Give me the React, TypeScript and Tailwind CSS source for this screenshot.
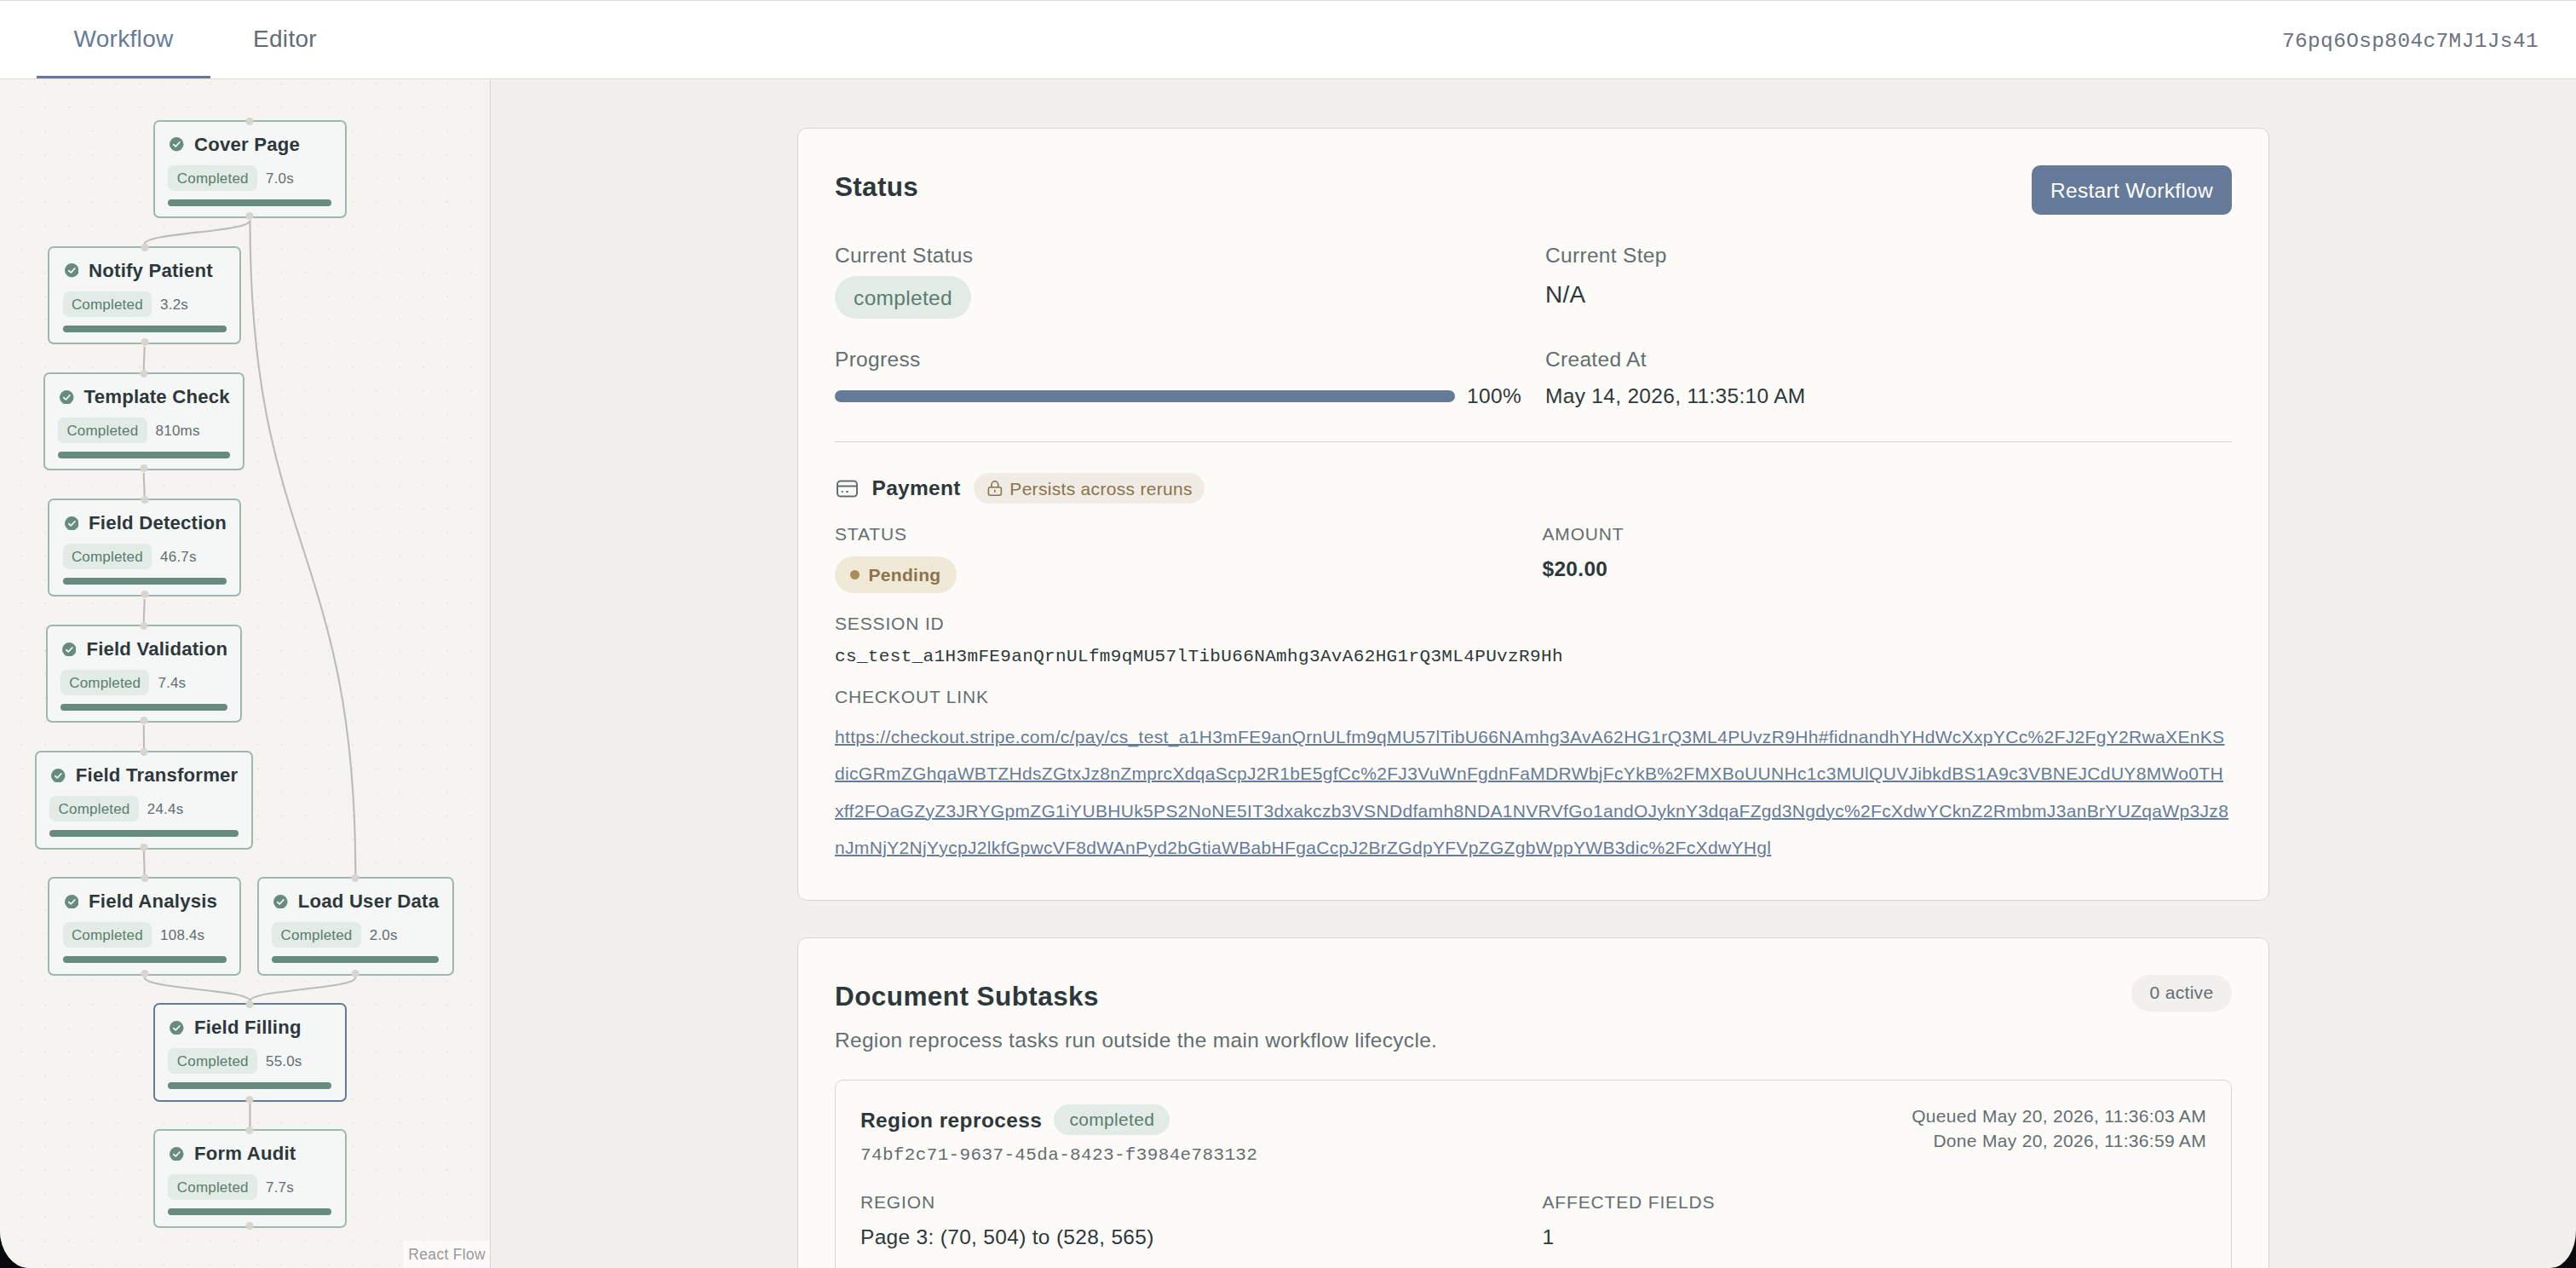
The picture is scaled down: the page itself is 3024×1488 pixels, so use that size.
import type { ReactNode } from "react";
import clsx from "clsx";

type WorkflowNode = {
	id: string;
	label: string;
	duration: string;
	x: number;
	y: number;
	width: number;
	selected?: boolean;
};

const NODE_HEIGHT = 115.3;
const CANVAS_TOP = 93;

const nodes: WorkflowNode[] = [
	{ id: "cover", label: "Cover Page", duration: "7.0s", x: 180.2, y: 141, width: 226.6 },
	{ id: "notify", label: "Notify Patient", duration: "3.2s", x: 56.3, y: 289, width: 226.6 },
	{ id: "template", label: "Template Check", duration: "810ms", x: 50.8, y: 437.2, width: 236 },
	{ id: "detection", label: "Field Detection", duration: "46.7s", x: 56.3, y: 585.2, width: 226.6 },
	{ id: "validation", label: "Field Validation", duration: "7.4s", x: 53.6, y: 733.2, width: 230.4 },
	{ id: "transformer", label: "Field Transformer", duration: "24.4s", x: 41, y: 881.3, width: 256 },
	{ id: "analysis", label: "Field Analysis", duration: "108.4s", x: 56.3, y: 1029.3, width: 226.6 },
	{ id: "userData", label: "Load User Data", duration: "2.0s", x: 302, y: 1029.3, width: 230.7 },
	{ id: "filling", label: "Field Filling", duration: "55.0s", x: 180.2, y: 1177.3, width: 226.6, selected: true },
	{ id: "audit", label: "Form Audit", duration: "7.7s", x: 180.2, y: 1325.4, width: 226.6 },
];

const edges: [string, string][] = [
	["cover", "notify"],
	["cover", "userData"],
	["notify", "template"],
	["template", "detection"],
	["detection", "validation"],
	["validation", "transformer"],
	["transformer", "analysis"],
	["analysis", "filling"],
	["userData", "filling"],
	["filling", "audit"],
];

const checkoutUrlLines = [
	"https://checkout.stripe.com/c/pay/cs_test_a1H3mFE9anQrnULfm9qMU57lTibU66NAmhg3AvA62HG1rQ3ML4PUvzR9Hh#fidnandhYHdWcXxpYCc%2FJ2FgY2RwaXEnKS",
	"dicGRmZGhqaWBTZHdsZGtxJz8nZmprcXdqaScpJ2R1bE5gfCc%2FJ3VuWnFgdnFaMDRWbjFcYkB%2FMXBoUUNHc1c3MUlQUVJibkdBS1A9c3VBNEJCdUY8MWo0TH",
	"xff2FOaGZyZ3JRYGpmZG1iYUBHUk5PS2NoNE5IT3dxakczb3VSNDdfamh8NDA1NVRVfGo1andOJyknY3dqaFZgd3Ngdyc%2FcXdwYCknZ2RmbmJ3anBrYUZqaWp3Jz8",
	"nJmNjY2NjYycpJ2lkfGpwcVF8dWAnPyd2bGtiaWBabHFgaCcpJ2BrZGdpYFVpZGZgbWppYWB3dic%2FcXdwYHgl",
];

function edgePath(sourceId: string, targetId: string) {
	const source = nodes.find((node) => node.id === sourceId)!;
	const target = nodes.find((node) => node.id === targetId)!;
	const sx = source.x + source.width / 2;
	const sy = source.y + NODE_HEIGHT + 2.5;
	const tx = target.x + target.width / 2;
	const ty = target.y - 2.5;
	const mid = (sy + ty) / 2;
	return `M${sx},${sy} C${sx},${mid} ${tx},${mid} ${tx},${ty}`;
}

function CheckBadgeIcon() {
	return (
		<svg className="ml-[2px] size-[16.5px] shrink-0" viewBox="0 0 16 16" fill="none">
			<circle cx="8" cy="8" r="8" fill="#678c7f" />
			<path
				d="M4.6 8.3 7 10.5l4.5-4.7"
				stroke="#f5f8f7"
				strokeWidth="1.7"
				strokeLinecap="round"
				strokeLinejoin="round"
			/>
		</svg>
	);
}

function CardIcon() {
	return (
		<svg
			className="size-[28px] shrink-0"
			viewBox="0 0 28 28"
			fill="none"
			stroke="#636e72"
			strokeWidth="2"
			strokeLinecap="round"
		>
			<rect x="3" y="5.6" width="23" height="18" rx="3.8" />
			<path d="M3 11.6h23M8.6 18h.4M14 18h1" />
		</svg>
	);
}

function LockIcon() {
	return (
		<svg
			className="size-[20px] shrink-0"
			viewBox="0 0 20 20"
			fill="none"
			stroke="#8b734b"
			strokeWidth="1.6"
			strokeLinecap="round"
			strokeLinejoin="round"
		>
			<rect x="2.4" y="8.7" width="15" height="9.6" rx="2.2" />
			<path d="M6 8.7V5.7a3.9 3.9 0 0 1 7.8 0v3M9.9 12.4v1.8" />
		</svg>
	);
}

function Handle({ className }: { className: string }) {
	return (
		<span
			className={clsx(
				"absolute left-1/2 size-[9px] -translate-x-1/2 rounded-full bg-[#d8d4ce]",
				className,
			)}
		/>
	);
}

function NodeCard({ node }: { node: WorkflowNode }) {
	return (
		<div
			className={clsx(
				"absolute flex h-[115.3px] flex-col rounded-[7px] border-2 bg-[#f5f7f6] px-[15.3px] pt-[11.6px] tracking-[0.19px]",
				node.selected ? "border-[#667b99]" : "border-[#9fb8ae]",
			)}
			style={{ left: node.x, top: node.y - CANVAS_TOP, width: node.width }}
		>
			<Handle className="-top-[5px]" />
			<div className="flex h-[30px] items-center gap-[12px]">
				<CheckBadgeIcon />
				<span className="text-[22.2px] leading-[30px] font-bold whitespace-nowrap text-[#2d383c]">
					{node.label}
				</span>
			</div>
			<div className="mt-[9.4px] flex h-[30px] items-center gap-[10px] text-[17px] leading-[31px]">
				<span className="h-[30px] rounded-[7px] bg-[#e2ebe5] px-[10.3px] text-[#5a7d6f]">
					Completed
				</span>
				<span className="h-[30px] text-[#636e72]">{node.duration}</span>
			</div>
			<div className="mt-[10px] h-[8px] rounded-full bg-[#678c7f]" />
			<Handle className="-bottom-[4px]" />
		</div>
	);
}

function FlowCanvas() {
	return (
		<aside className="relative w-[576px] shrink-0 overflow-hidden border-r border-[#d4d4d0] bg-[#f6f4f1]">
			<svg className="absolute inset-0" width="575" height="1395" viewBox="0 93 575 1395" fill="none">
				<pattern
					id="dots"
					x="11.5"
					y="84.45"
					width="27.75"
					height="27.71"
					patternUnits="userSpaceOnUse"
				>
					<circle cx="13.9" cy="13.9" r="0.9" fill="#d9d8d3" />
				</pattern>
				<rect x="14" y="93" width="561" height="1395" fill="url(#dots)" />
				<g stroke="#babcbb" strokeWidth="2.1">
					{edges.map(([source, target]) => (
						<path key={`${source}-${target}`} d={edgePath(source, target)} />
					))}
				</g>
			</svg>
			{nodes.map((node) => (
				<NodeCard key={node.id} node={node} />
			))}
			<span className="absolute right-0 bottom-0 h-[32px] bg-white/50 px-[5px] text-[17.5px] leading-[32px] text-[#999]">
				React Flow
			</span>
		</aside>
	);
}

function Header() {
	return (
		<header className="flex h-[93px] shrink-0 items-stretch justify-between border-b border-[#dfddd2] bg-white pr-[44px] pl-[43px] shadow-[inset_0_2px_0_-1px_#dfe1df]">
			<nav className="flex gap-[6px] text-[28px] leading-[91px]">
				<button type="button" className="w-[204px] border-b-3 border-[#667b99] text-[#667b99]">
					Workflow
				</button>
				<button type="button" className="border-b-3 border-transparent px-[44px] text-[#636e72]">
					Editor
				</button>
			</nav>
			<span className="font-['Liberation_Mono',monospace] text-[24.5px] leading-[98px] tracking-[0.35px] text-[#6b7280]">
				76pq6Osp804c7MJ1Js41
			</span>
		</header>
	);
}

function Field({ label, children }: { label: string; children: ReactNode }) {
	return (
		<div>
			<div className="mb-[7px] leading-[35px] text-[#636e72]">{label}</div>
			{children}
		</div>
	);
}

function Caption({ className, children }: { className?: string; children: ReactNode }) {
	return (
		<div
			className={clsx(
				"text-[21px] leading-[30px] tracking-[0.84px] text-[#636e72] uppercase",
				className,
			)}
		>
			{children}
		</div>
	);
}

function StatusPanel() {
	return (
		<section className="h-[907px] shrink-0 rounded-[11px] border border-[#d6d5d0] bg-[#fdfbf8] p-[43px]">
			<div className="flex items-start justify-between">
				<h2 className="text-[31.5px] leading-[50px] font-bold">Status</h2>
				<button
					type="button"
					className="h-[58px] w-[235px] rounded-[10px] bg-[#667b99] leading-[59px] text-white"
				>
					Restart Workflow
				</button>
			</div>

			<div className="mt-[30px] grid grid-cols-2 gap-x-[28px] gap-y-[30px]">
				<Field label="Current Status">
					<span className="block h-[50px] w-[160px] rounded-full bg-[#e2ebe5] text-center leading-[51px] text-[#5a7d6f]">
						completed
					</span>
				</Field>
				<Field label="Current Step">
					<div className="text-[28px] leading-[44px]">N/A</div>
				</Field>
				<Field label="Progress">
					<div className="flex items-center gap-[14px] leading-[37px]">
						<div className="h-[14px] flex-1 rounded-full bg-[#667b99]" />
						<span>100%</span>
					</div>
				</Field>
				<Field label="Created At">
					<div className="leading-[37px]">May 14, 2026, 11:35:10 AM</div>
				</Field>
			</div>

			<div className="mt-[35px] border-t border-[#d6d5d0] pt-[36px]">
				<div className="flex h-[36px] items-center">
					<CardIcon />
					<h3 className="ml-[15.5px] leading-[36px] font-bold">Payment</h3>
					<span className="ml-[15px] flex h-[36px] items-center gap-[7.5px] rounded-full bg-[#f0ebe4] pr-[14px] pl-[15px] text-[21px] text-[#8b734b]">
						<LockIcon />
						Persists across reruns
					</span>
				</div>

				<div className="mt-[21px] grid grid-cols-2 gap-x-[21px]">
					<div>
						<Caption>Status</Caption>
						<span className="mt-[11px] flex h-[43px] w-[143px] items-center gap-[10.5px] rounded-full bg-[#f1e9d8] pl-[18px] text-[21px] font-bold text-[#8b734b]">
							<span className="size-[11px] rounded-full bg-[#a98d5d]" />
							Pending
						</span>
					</div>
					<div>
						<Caption>Amount</Caption>
						<div className="mt-[8px] leading-[35px] font-bold">$20.00</div>
					</div>
				</div>

				<Caption className="mt-[21px]">Session ID</Caption>
				<div className="mt-[7px] font-['Liberation_Mono',monospace] text-[21px] leading-[34px] tracking-[0.35px]">
					cs_test_a1H3mFE9anQrnULfm9qMU57lTibU66NAmhg3AvA62HG1rQ3ML4PUvzR9Hh
				</div>

				<Caption className="mt-[15px]">Checkout Link</Caption>
				<a
					href="#"
					className="mt-[10px] block text-[21px] leading-[43.3px] tracking-[0.33px] whitespace-nowrap text-[#667b99] underline decoration-2"
				>
					{checkoutUrlLines.map((line) => (
						<span key={line} className="block">
							{line}
						</span>
					))}
				</a>
			</div>
		</section>
	);
}

function SubtasksPanel() {
	return (
		<section className="h-[600px] shrink-0 rounded-[11px] border border-[#d6d5d0] bg-[#fdfbf8] p-[43px]">
			<div className="flex items-start justify-between">
				<div>
					<h2 className="text-[31.5px] leading-[50px] font-bold tracking-[0.42px]">
						Document Subtasks
					</h2>
					<p className="mt-[9px] leading-[35px] text-[#636e72]">
						Region reprocess tasks run outside the main workflow lifecycle.
					</p>
				</div>
				<span className="h-[43px] w-[118px] rounded-full bg-[#f1f0ed] text-center text-[21px] leading-[42px] text-[#636e72]">
					0 active
				</span>
			</div>

			<article className="mt-[29px] h-[400px] rounded-[10px] border border-[#d6d5d0] px-[29px] pt-[28px]">
				<div className="flex items-start justify-between">
					<div>
						<div className="flex h-[36px] items-center gap-[14px]">
							<h3 className="font-bold tracking-[0.4px]">Region reprocess</h3>
							<span className="h-[36px] w-[136px] rounded-full bg-[#e2ebe5] text-center text-[21px] leading-[36px] text-[#5a7d6f]">
								completed
							</span>
						</div>
						<div className="mt-[9px] font-['Liberation_Mono',monospace] text-[21px] leading-[30px] tracking-[0.35px] text-[#636e72]">
							74bf2c71-9637-45da-8423-f3984e783132
						</div>
					</div>
					<div className="-mt-px text-right text-[21px] leading-[29px] text-[#636e72]">
						<div>Queued May 20, 2026, 11:36:03 AM</div>
						<div>Done May 20, 2026, 11:36:59 AM</div>
					</div>
				</div>

				<div className="mt-[25px] grid grid-cols-2 gap-x-[21px]">
					<div>
						<Caption>Region</Caption>
						<div className="mt-[8px] leading-[35px]">Page 3: (70, 504) to (528, 565)</div>
					</div>
					<div>
						<Caption>Affected Fields</Caption>
						<div className="mt-[8px] leading-[35px]">1</div>
					</div>
				</div>
			</article>
		</section>
	);
}

export default function App() {
	return (
		<div className="h-[1488px] w-[3024px] bg-[#08090a]">
			<div className="flex h-full flex-col overflow-hidden bg-[#f1f0ec] font-['Liberation_Sans',Arial,sans-serif] text-[24.5px] leading-[35px] tracking-[0.31px] text-[#2d383c] [border-bottom-left-radius:34px_44px] [border-bottom-right-radius:30px_44px]">
				<Header />
				<div className="flex min-h-0 flex-1">
					<FlowCanvas />
					<main className="flex flex-1 flex-col items-center overflow-hidden pt-[57px]">
						<div className="flex w-[1728px] flex-col gap-[43px]">
							<StatusPanel />
							<SubtasksPanel />
						</div>
					</main>
				</div>
			</div>
		</div>
	);
}
